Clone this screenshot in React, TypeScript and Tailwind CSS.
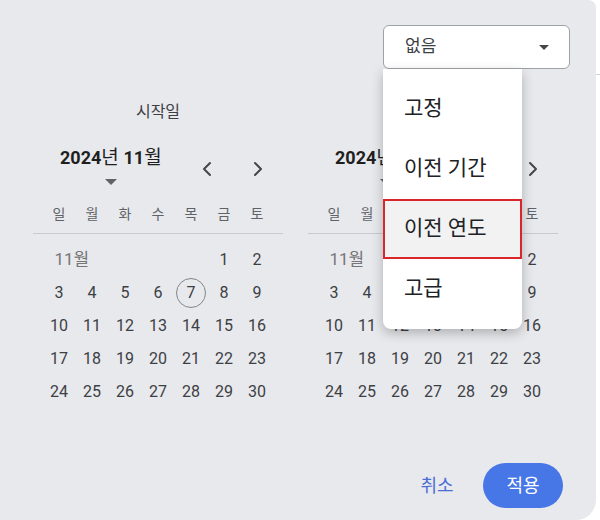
import { useState } from "react";

const weekdays = ["일", "월", "화", "수", "목", "금", "토"];
const weeks = [
  [3, 4, 5, 6, 7, 8, 9],
  [10, 11, 12, 13, 14, 15, 16],
  [17, 18, 19, 20, 21, 22, 23],
  [24, 25, 26, 27, 28, 29, 30],
];
const options = ["고정", "이전 기간", "이전 연도", "고급"];

function Chevron({ dir }: { dir: "left" | "right" }) {
  return (
    <svg width="12" height="16" viewBox="0 0 12 16" fill="none">
      <path
        d={dir === "left" ? "M9 2 L3 8 L9 14" : "M3 2 L9 8 L3 14"}
        stroke="#444746"
        strokeWidth="2"
        strokeLinecap="round"
        strokeLinejoin="round"
      />
    </svg>
  );
}

function Calendar({ title }: { title: string }) {
  return (
    <div className="w-[250px] flex flex-col">
      <div className="h-[20px] text-[16px] leading-[20px] text-center text-[#3c4043]">{title}</div>

      {/* Month header */}
      <div className="flex items-start mt-[24px] h-[58px] pl-[27px]">
        <div className="flex flex-col items-center">
          <div className="h-[24px] leading-[24px] text-[18px] text-[#1f1f1f] whitespace-nowrap">
            <span className="font-bold">2024</span>
            <span className="font-normal text-[19px]">년 </span>
            <span className="font-bold">11</span>
            <span className="font-normal text-[19px]">월</span>
          </div>
          <div className="mt-[9px] w-0 h-0 border-l-[6px] border-r-[6px] border-t-[6px] border-l-transparent border-r-transparent border-t-[#5f6368]" />
        </div>
        <div className="flex ml-auto mr-[9px] mt-[11px]">
          <button className="w-[33px] h-[24px] flex items-center justify-center">
            <Chevron dir="left" />
          </button>
          <button className="ml-[18px] w-[33px] h-[24px] flex items-center justify-center">
            <Chevron dir="right" />
          </button>
        </div>
      </div>

      {/* Weekdays */}
      <div className="grid grid-cols-7 w-[231px] mx-auto h-[20px] text-[14px] leading-[20px] text-[#5f6368]">
        {weekdays.map((d) => (
          <div key={d} className="text-center">{d}</div>
        ))}
      </div>
      <div className="mt-[9px] border-t border-[#c8cacd]" />

      {/* Days */}
      <div className="grid grid-cols-7 w-[231px] mx-auto mt-[9px] text-[16px] text-[#3c4043]">
        <div className="col-span-5 h-[33px] flex items-center pl-[12px] text-[17px] text-[#767676]">11월</div>
        <div className="h-[33px] flex items-center justify-center">1</div>
        <div className="h-[33px] flex items-center justify-center">2</div>
        {weeks.flat().map((n) => (
          <div key={n} className="h-[33px] flex items-center justify-center">
            {n === 7 ? (
              <span className="w-[30px] h-[30px] rounded-full border border-[#80868b] flex items-center justify-center">
                {n}
              </span>
            ) : (
              n
            )}
          </div>
        ))}
      </div>
    </div>
  );
}

export default function App() {
  const [selected] = useState(2);

  return (
    <div
      className="w-[600px] h-[520px] bg-white flex overflow-hidden"
      style={{ fontFamily: "Roboto, 'Noto Sans CJK KR', 'Noto Sans', sans-serif" }}
    >
      <div className="w-[596px] h-[520px] bg-[#e8e9ed] rounded-tr-[8px] rounded-br-[20px] flex flex-col">
        {/* Comparison select */}
        <div className="flex justify-end pt-[25px] pr-[26px]">
          <div className="relative">
            <div className="w-[187px] h-[44px] bg-white border border-[#9ea2a6] rounded-[6px] flex items-center pl-[21px] pr-[20px] text-[17px] text-[#3c4043]">
              <span>없음</span>
              <span className="ml-auto w-0 h-0 border-l-[5px] border-r-[5px] border-t-[5px] border-l-transparent border-r-transparent border-t-[#444746]" />
            </div>
            <div className="absolute left-0 top-full w-[139px] bg-white rounded-b-[8px] shadow-[0_4px_12px_rgba(0,0,0,0.25)] pt-[10px] pb-[10px] z-10">
              {options.map((o, i) => (
                <div
                  key={o}
                  className={`h-[60px] flex items-center text-[21px] text-[#202124] ${
                    i === selected ? "bg-[#f2f2f2] border-2 border-[#d9262b] pl-[19px]" : "pl-[21px]"
                  }`}
                >
                  {o}
                </div>
              ))}
            </div>
          </div>
        </div>

        {/* Calendars */}
        <div className="flex mt-[33px] pl-[33px] gap-[25px]">
          <Calendar title="시작일" />
          <Calendar title="종료일" />
        </div>

        {/* Footer */}
        <div className="mt-auto flex justify-end items-center pr-[33px] pb-[12px]">
          <button className="w-[64px] h-[45px] text-[18px] text-[#4a6ed5]">취소</button>
          <button className="ml-[14px] w-[80px] h-[45px] rounded-full bg-[#4776e6] text-white text-[18px]">적용</button>
        </div>
      </div>
      <div className="flex-1 pt-[74px]">
        <div className="border-t border-[#cfd2d6]" />
      </div>
    </div>
  );
}
